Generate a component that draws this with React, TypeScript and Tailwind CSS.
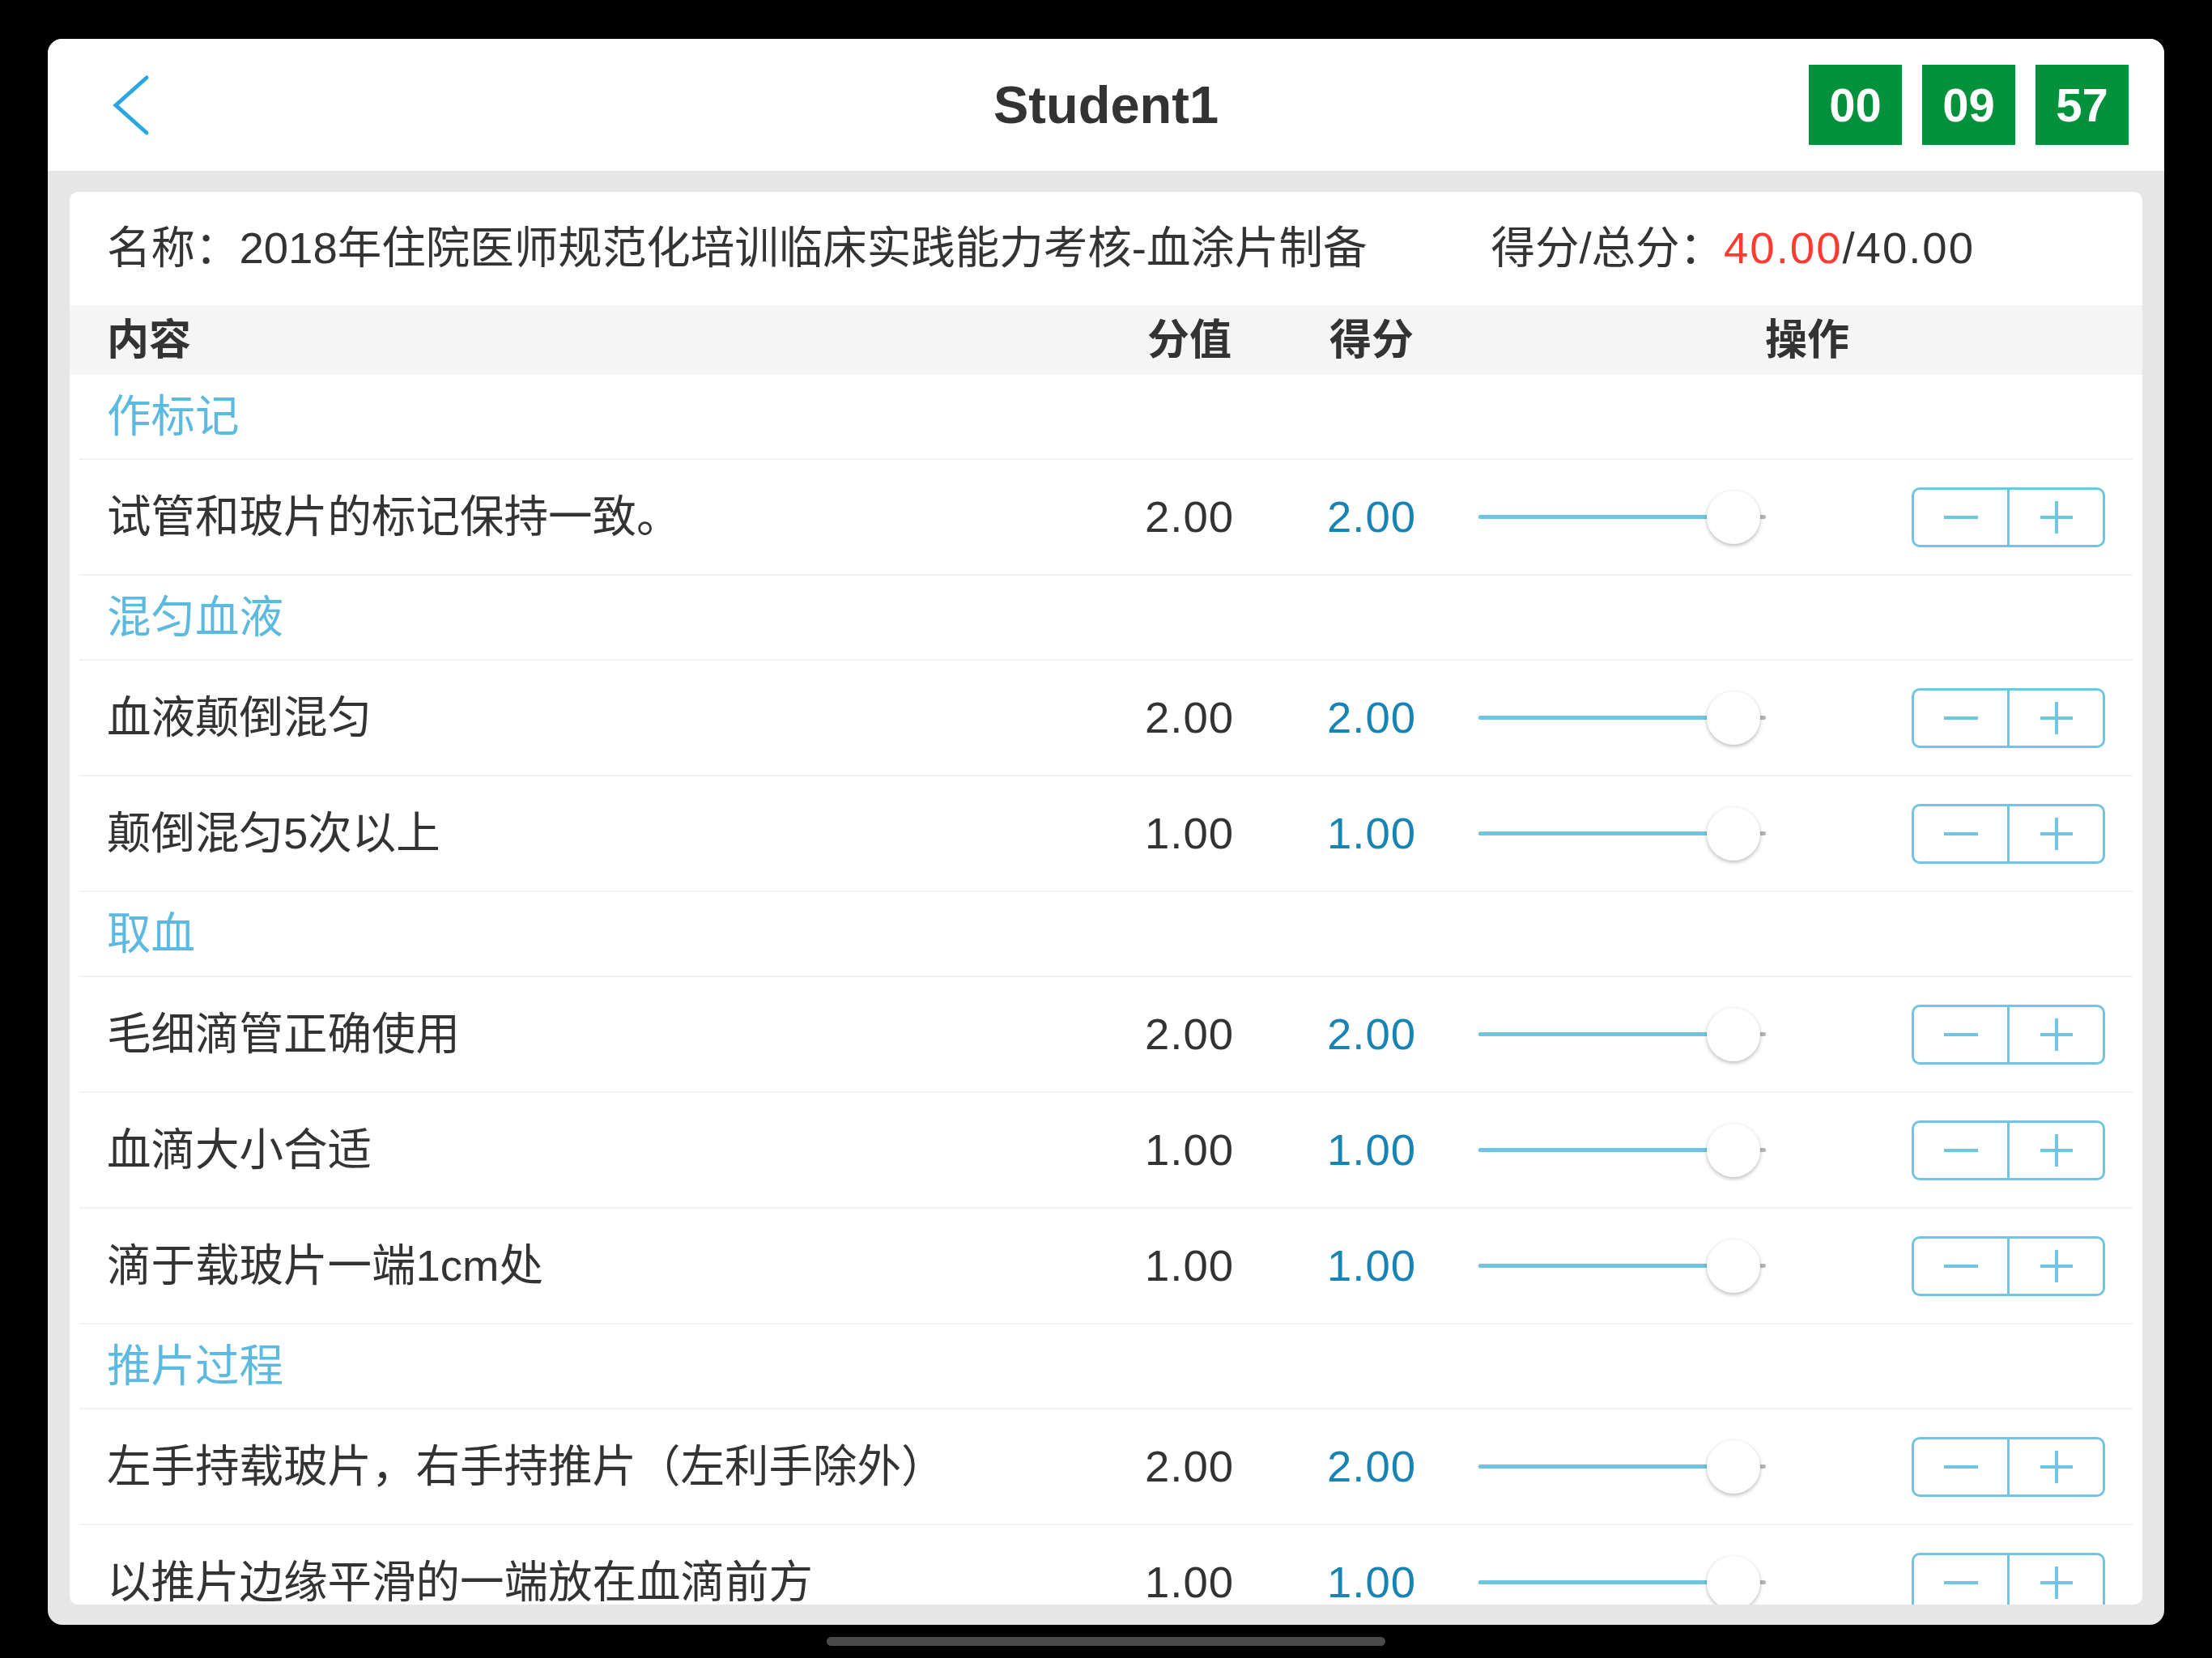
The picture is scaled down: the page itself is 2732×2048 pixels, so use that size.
const sections = [
  { title: '作标记', items: [['试管和玻片的标记保持一致。', '2.00']] },
  {
    title: '混匀血液',
    items: [
      ['血液颠倒混匀', '2.00'],
      ['颠倒混匀5次以上', '1.00'],
    ],
  },
  {
    title: '取血',
    items: [
      ['毛细滴管正确使用', '2.00'],
      ['血滴大小合适', '1.00'],
      ['滴于载玻片一端1cm处', '1.00'],
    ],
  },
  {
    title: '推片过程',
    items: [
      ['左手持载玻片，右手持推片（左利手除外）', '2.00'],
      ['以推片边缘平滑的一端放在血滴前方', '1.00'],
    ],
  },
]

const cols = 'grid grid-cols-[1fr_200px_250px_781px] items-center'

function Slider() {
  return (
    <div className="relative ml-[7px] flex h-[66px] w-[355px] items-center">
      <div className="h-[5px] w-full rounded-full bg-[#b5b5b5]">
        <div className="h-full w-[315px] rounded-full bg-[#72c5e2]" />
      </div>
      {/* thumb */}
      <div className="absolute left-[282px] top-0 h-[66px] w-[66px] rounded-full bg-white shadow-[0_2px_5px_rgba(0,0,0,0.28)]" />
    </div>
  )
}

function Stepper() {
  return (
    <div className="flex h-[74px] w-[239px] rounded-[10px] border-[3px] border-[#72c5e2]">
      <div className="flex flex-1 items-center justify-center">
        <svg width="42" height="42" viewBox="0 0 42 42">
          <rect x="0" y="19" width="42" height="4" fill="#72c5e2" />
        </svg>
      </div>
      <div className="flex flex-1 items-center justify-center border-l-[3px] border-[#72c5e2]">
        <svg width="40" height="40" viewBox="0 0 40 40">
          <rect x="0" y="18" width="40" height="4" fill="#72c5e2" />
          <rect x="18" y="0" width="4" height="40" fill="#72c5e2" />
        </svg>
      </div>
    </div>
  )
}

export default function App() {
  return (
    <div className="flex h-[2048px] w-[2732px] flex-col items-center bg-black font-['Liberation_Sans','Noto_Sans_CJK_SC',sans-serif] text-[#333]">
      {/* Screen */}
      <div className="mt-[48px] flex h-[1959px] w-[2614px] flex-col overflow-hidden rounded-[18px] bg-[#e6e6e6]">
        {/* Nav bar */}
        <div className="grid h-[163px] shrink-0 grid-cols-[1fr_auto_1fr] items-center bg-white">
          <div className="pl-[78px]">
            <svg width="50" height="76" viewBox="0 0 50 76">
              <polyline
                points="44,4 6,38 44,72"
                fill="none"
                stroke="#2aa7df"
                strokeWidth="5"
                strokeLinecap="round"
              />
            </svg>
          </div>
          <div className="text-[65px] font-bold leading-none text-[#333]">Student1</div>
          <div className="flex justify-end gap-[25px] pr-[44px]">
            {['00', '09', '57'].map((t) => (
              <div
                key={t}
                className="flex h-[99px] w-[115px] items-center justify-center bg-[#03913b] text-[58px] font-bold leading-none text-white"
              >
                {t}
              </div>
            ))}
          </div>
        </div>

        {/* Card */}
        <div className="mx-[27px] mb-[25px] mt-[26px] flex-1 overflow-hidden rounded-[10px] bg-white text-[54.5px]">
          <div className="flex h-[140px] items-center pl-[46px]">
            <span>名称：2018年住院医师规范化培训临床实践能力考核-血涂片制备</span>
            <span className="ml-[153px]">
              得分/总分：
              <span className="tracking-[2px] text-[#ff3b30]">40.00</span>
              <span className="tracking-[2px]">/40.00</span>
            </span>
          </div>

          <div className={`${cols} h-[86px] bg-[#f5f5f5] px-[46px] text-[52px] font-bold`}>
            <div>内容</div>
            <div className="text-center">分值</div>
            <div className="text-center">得分</div>
            <div className="pl-[45px] text-center">操作</div>
          </div>

          <div className="px-[12px]">
            {sections.map((s) => (
              <div key={s.title}>
                <div className="flex h-[105px] items-center border-b-2 border-[#f2f2f2] pl-[34px] text-[#5cb9df]">
                  {s.title}
                </div>
                {s.items.map(([name, val]) => (
                  <div key={name} className={`${cols} h-[143px] border-b-2 border-[#f2f2f2] px-[34px]`}>
                    <div>{name}</div>
                    <div className="text-center tracking-[1px]">{val}</div>
                    <div className="text-center tracking-[1px] text-[#1784b4]">{val}</div>
                    <div className="flex items-center justify-between">
                      <Slider />
                      <Stepper />
                    </div>
                  </div>
                ))}
              </div>
            ))}
          </div>
        </div>
      </div>

      {/* Home indicator */}
      <div className="mt-[15px] h-[11px] w-[690px] rounded-full bg-[#4a4a4a]" />
    </div>
  )
}
